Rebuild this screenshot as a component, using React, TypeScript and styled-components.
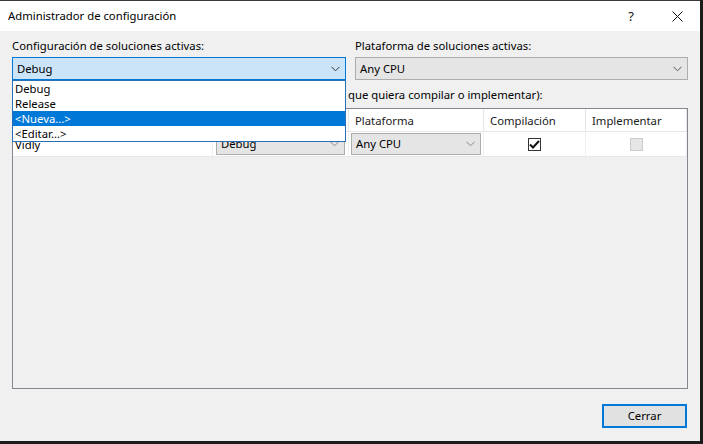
import React from "react";
import styled, { createGlobalStyle } from "styled-components";

const GlobalStyle = createGlobalStyle`
  html, body { margin: 0; padding: 0; background: #1c1c1c; }
  body { font-family: "Segoe UI", "Noto Sans", "Liberation Sans", sans-serif; font-size: 11.3px; color: #000; }
  * { box-sizing: border-box; }
`;

const Screen = styled.div`
  width: 703px;
  height: 444px;
  background: #1c1c1c;
  overflow: hidden;
`;

const Window = styled.div`
  width: 700px;
  height: 441px;
  border-top: 1px solid #3a3a3a;
  background: #f0f0f0;
  display: flex;
  flex-direction: column;
`;

const TitleBar = styled.div`
  height: 30px;
  background: #ffffff;
  display: flex;
  align-items: center;
  padding-left: 8px;
`;

const Title = styled.div`
  flex: 1;
  font-size: 11.3px;
  line-height: 16px;
  margin-top: -1px;
`;

const TitleButton = styled.div<{ $w: number }>`
  width: ${(p) => p.$w}px;
  height: 30px;
  display: flex;
  align-items: center;
  justify-content: center;
  font-size: 13px;
  color: #111;
`;

const Body = styled.div`
  flex: 1;
  padding: 7px 12px 0 12px;
  display: flex;
  flex-direction: column;
`;

const TopRow = styled.div`
  display: grid;
  grid-template-columns: 334px 333px;
  column-gap: 9px;
`;

const Field = styled.div`
  display: flex;
  flex-direction: column;
  position: relative;
`;

const Label = styled.div`
  line-height: 16px;
  height: 16px;
  margin-bottom: 3px;
  white-space: nowrap;
`;

const Combo = styled.div<{ $focus?: boolean; $h?: number }>`
  height: ${(p) => p.$h ?? 23}px;
  border: 1px solid ${(p) => (p.$focus ? "#0078d7" : "#adadad")};
  background: ${(p) => (p.$focus ? "#cce4f7" : "#e5e5e5")};
  display: flex;
  align-items: center;
  padding-left: 4px;
  padding-right: 5px;
  line-height: 16px;
`;

const ComboText = styled.span`
  flex: 1;
  white-space: nowrap;
`;

const Chevron = ({ color = "#333" }: { color?: string }) => (
  <svg width="9" height="6" viewBox="0 0 9 6">
    <polyline points="0.5,0.8 4.5,4.8 8.5,0.8" fill="none" stroke={color} strokeWidth="1" />
  </svg>
);

const DropList = styled.div`
  position: absolute;
  left: 0;
  right: 0;
  top: 42px;
  height: 62px;
  background: #ffffff;
  border: 1px solid #2a70b8;
  z-index: 5;
  display: flex;
  flex-direction: column;
`;

const DropItem = styled.div<{ $sel?: boolean }>`
  height: 15px;
  line-height: 15px;
  padding-left: 2px;
  background: ${(p) => (p.$sel ? "#0078d7" : "transparent")};
  color: ${(p) => (p.$sel ? "#ffffff" : "#000000")};
  white-space: nowrap;
`;

const SectionLabel = styled.div`
  margin-top: 7px;
  line-height: 16px;
  height: 16px;
  margin-bottom: 5px;
  white-space: nowrap;
  overflow: hidden;
`;

const Table = styled.div`
  height: 281px;
  border: 1px solid #828790;
  background: #f0f0f0;
  display: flex;
  flex-direction: column;
`;

const GridRow = styled.div<{ $h: number; $bg: string }>`
  display: grid;
  grid-template-columns: 200px 136px 135px 102px 101px;
  height: ${(p) => p.$h}px;
  background: ${(p) => p.$bg};
  border-bottom: 1px solid #e8e8e8;
`;

const HeadCell = styled.div`
  display: flex;
  align-items: center;
  padding-left: 6px;
  border-right: 1px solid #e5e5e5;
  color: #1a1a1a;
  white-space: nowrap;
`;

const Cell = styled.div<{ $center?: boolean; $pad?: number }>`
  display: flex;
  align-items: center;
  justify-content: ${(p) => (p.$center ? "center" : "flex-start")};
  padding: 0 ${(p) => p.$pad ?? 0}px;
  border-right: 1px solid #f0f0f0;
  white-space: nowrap;
`;

const CheckBox = styled.div<{ $disabled?: boolean }>`
  width: 13px;
  height: 13px;
  border: 1px solid ${(p) => (p.$disabled ? "#cccccc" : "#333333")};
  background: ${(p) => (p.$disabled ? "#e6e6e6" : "#ffffff")};
  display: flex;
  align-items: center;
  justify-content: center;
`;

const Footer = styled.div`
  display: flex;
  justify-content: flex-end;
  margin-top: 15px;
  padding-right: 1px;
`;

const Button = styled.div`
  width: 85px;
  height: 24px;
  border: 2px solid #0078d7;
  background: #e1e1e1;
  display: flex;
  align-items: center;
  justify-content: center;
  line-height: 16px;
`;

export default function App() {
  return (
    <>
      <GlobalStyle />
      <Screen>
        <Window>
          <TitleBar>
            <Title>Administrador de configuración</Title>
            <TitleButton $w={46}>?</TitleButton>
            <TitleButton $w={46}>
              <svg width="11" height="11" viewBox="0 0 11 11">
                <path d="M0.5 0.5 L10.5 10.5 M10.5 0.5 L0.5 10.5" stroke="#111" strokeWidth="1" />
              </svg>
            </TitleButton>
          </TitleBar>
          <Body>
            <TopRow>
              <Field>
                <Label>Configuración de soluciones activas:</Label>
                <Combo $focus>
                  <ComboText>Debug</ComboText>
                  <Chevron color="#333" />
                </Combo>
                <DropList>
                  <DropItem>Debug</DropItem>
                  <DropItem>Release</DropItem>
                  <DropItem $sel>&lt;Nueva...&gt;</DropItem>
                  <DropItem>&lt;Editar...&gt;</DropItem>
                </DropList>
              </Field>
              <Field>
                <Label>Plataforma de soluciones activas:</Label>
                <Combo>
                  <ComboText>Any CPU</ComboText>
                  <Chevron color="#555" />
                </Combo>
              </Field>
            </TopRow>
            <SectionLabel>
              Contextos del proyecto (active las configuraciones del proyecto que quiera compilar o implementar):
            </SectionLabel>
            <Table>
              <GridRow $h={23} $bg="#ffffff">
                <HeadCell>Proyecto</HeadCell>
                <HeadCell>Configuración</HeadCell>
                <HeadCell>Plataforma</HeadCell>
                <HeadCell>Compilación</HeadCell>
                <HeadCell>Implementar</HeadCell>
              </GridRow>
              <GridRow $h={25} $bg="#ffffff">
                <Cell $pad={2}>Vidly</Cell>
                <Cell $pad={3}>
                  <Combo $h={22} style={{ flex: 1 }}>
                    <ComboText>Debug</ComboText>
                    <Chevron color="#888" />
                  </Combo>
                </Cell>
                <Cell $pad={2}>
                  <Combo $h={22} style={{ flex: 1 }}>
                    <ComboText>Any CPU</ComboText>
                    <Chevron color="#888" />
                  </Combo>
                </Cell>
                <Cell $center>
                  <CheckBox>
                    <svg width="11" height="9" viewBox="0 0 11 9">
                      <polyline points="1,4.5 4,7.5 10,1" fill="none" stroke="#111" strokeWidth="2" />
                    </svg>
                  </CheckBox>
                </Cell>
                <Cell $center>
                  <CheckBox $disabled />
                </Cell>
              </GridRow>
            </Table>
            <Footer>
              <Button>Cerrar</Button>
            </Footer>
          </Body>
        </Window>
      </Screen>
    </>
  );
}
